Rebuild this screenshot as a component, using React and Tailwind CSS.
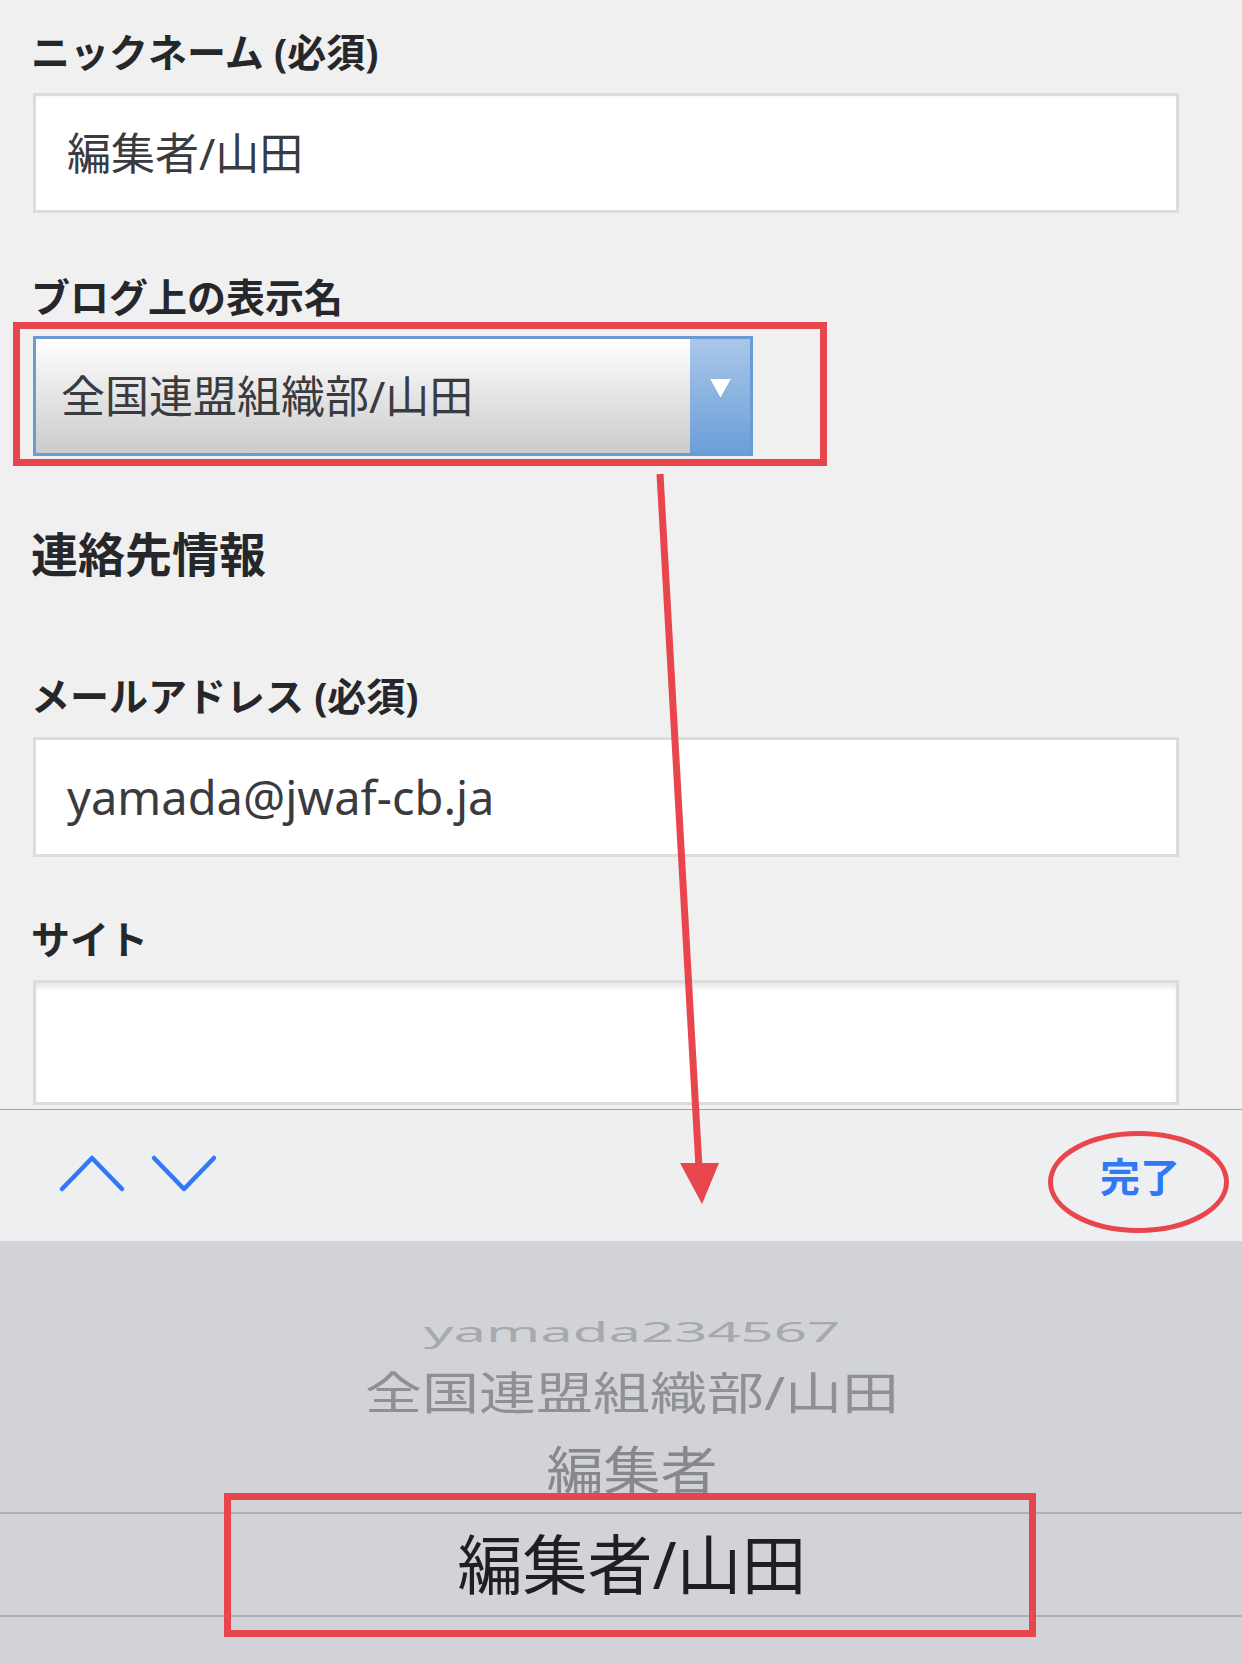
export default function App() {
  const label = "-ml-[2px] flex h-[60px] items-center text-[39px] font-bold leading-none text-[#26272b]";
  const input =
    "flex w-[1146px] items-center border-[3px] border-[#dcdcdc] bg-white pl-[31px] leading-none text-[#3a3b3f]";
  return (
    <div className="relative h-[1663px] w-[1242px] overflow-hidden bg-[#f0f0f0] font-['Noto_Sans','Noto_Sans_CJK_JP',sans-serif]">
      <div className="flex h-full flex-col">
        {/* form */}
        <div className="h-[1109px] shrink-0 overflow-hidden pl-[33px]">
          <div className={`${label} mt-[21px]`}>ニックネーム (必須)</div>
          <div className={`${input} mt-[12px] h-[120px] text-[44px] shadow-[inset_0_3px_2px_-1px_rgba(0,0,0,0.03)]`}>編集者/山田</div>

          <div className={`${label} mt-[53px]`}>ブログ上の表示名</div>
          <div className="mt-[10px] flex h-[120px] w-[720px] border-[3px] border-[#6b9bd5]">
            <div className="flex flex-1 items-center bg-linear-to-b from-white to-[#cbcbcb] pl-[25px] text-[44px] leading-none text-[#3a3b3f]">
              全国連盟組織部/山田
            </div>
            <div className="flex w-[60px] items-start justify-center bg-linear-to-b from-[#aac7e9] to-[#6c9ed8] pt-[40px]">
              <svg width="23" height="21" viewBox="0 0 23 21">
                <polygon points="1,1 22,1 11.5,20" fill="#4f7fb8" opacity="0.6" />
                <polygon points="1,0 22,0 11.5,19" fill="#ffffff" />
              </svg>
            </div>
          </div>

          <div className="-ml-[2px] mt-[68px] flex h-[60px] items-center text-[47px] font-bold leading-none text-[#26272b]">
            連絡先情報
          </div>

          <div className={`${label} mt-[81px]`}>メールアドレス (必須)</div>
          <div className={`${input} mt-[12px] h-[120px] text-[47px]`}>yamada@jwaf-cb.ja</div>

          <div className={`${label} mt-[51px]`}>サイト</div>
          <div className={`${input} mt-[12px] h-[125px] shadow-[inset_0_6px_6px_-3px_rgba(0,0,0,0.12)]`}></div>
        </div>

        {/* keyboard accessory toolbar */}
        <div className="flex h-[132px] shrink-0 items-start border-t border-[#a2a3a6] bg-[#eeeff1] pt-[44px]">
          <svg className="ml-[58px]" width="164" height="40" viewBox="0 0 164 40">
            <polyline points="4,35 34,4 64,35" fill="none" stroke="#3178f5" strokeWidth="4.5" strokeLinecap="round" strokeLinejoin="round" />
            <polyline points="96,4 126,35 156,4" fill="none" stroke="#3178f5" strokeWidth="4.5" strokeLinecap="round" strokeLinejoin="round" />
          </svg>
          <div className="ml-auto mr-[62px] mt-[3px] text-[40px] font-bold leading-none text-[#3178f5]">完了</div>
        </div>

        {/* picker wheel */}
        <div className="flex flex-1 flex-col items-center bg-[#d1d3d8] pl-[22px]">
          <div className="h-[61px] shrink-0" />
          <div className="flex h-[60px] shrink-0 items-center justify-center">
            <span className="scale-y-[0.46] text-[58px] leading-none text-[#a7a9ad]">yamada234567</span>
          </div>
          <div className="flex h-[60px] shrink-0 items-center justify-center">
            <span className="scale-y-[0.8] text-[57px] leading-none text-[#8e9094]">全国連盟組織部/山田</span>
          </div>
          <div className="flex h-[90px] shrink-0 items-center justify-center pt-[6px]">
            <span className="scale-y-[0.92] text-[57px] leading-none text-[#86888c]">編集者</span>
          </div>
          <div className="-ml-[22px] flex h-[105px] w-[1242px] shrink-0 items-center justify-center border-y-2 border-[#aeb0b4] pl-[22px]">
            <span className="text-[65px] leading-none text-[#1f1f21]">編集者/山田</span>
          </div>
        </div>
      </div>

      {/* annotations */}
      <svg
        className="pointer-events-none absolute left-0 top-0"
        width="1242"
        height="1663"
        viewBox="0 0 1242 1663"
      >
        <rect x="16.5" y="325.5" width="807" height="137" fill="none" stroke="#e8464c" strokeWidth="7" />
        <rect x="227.5" y="1496.5" width="805" height="137" fill="none" stroke="#e8464c" strokeWidth="7" />
        <line x1="660" y1="474" x2="699" y2="1168" stroke="#e8464c" strokeWidth="7" />
        <polygon points="680,1163 719,1163 702,1204" fill="#e8464c" />
        <ellipse cx="1138.5" cy="1182" rx="88" ry="48.5" fill="none" stroke="#e8464c" strokeWidth="5" />
      </svg>
    </div>
  );
}
